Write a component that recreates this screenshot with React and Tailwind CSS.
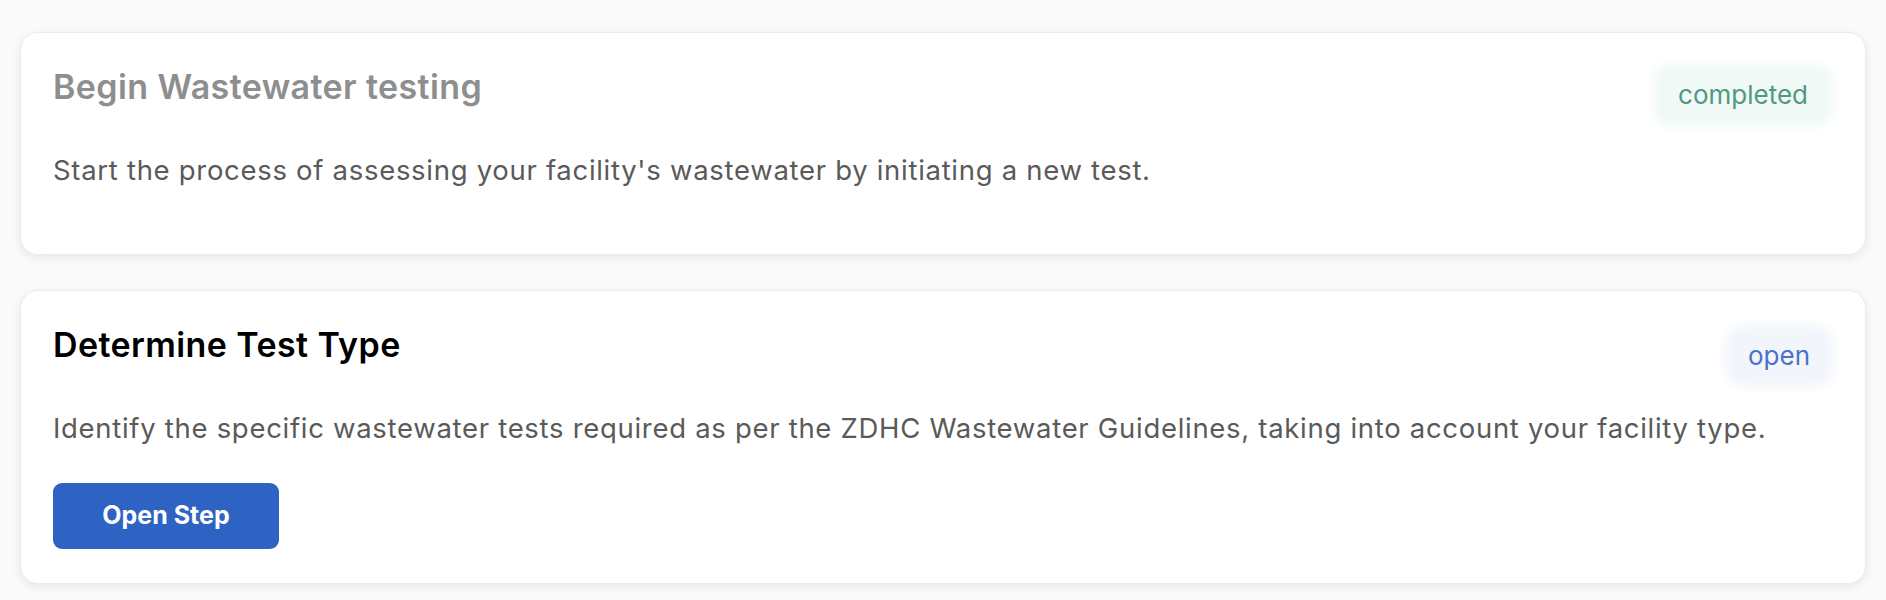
import React from "react";

const steps = [
  {
    title: "Begin Wastewater testing",
    description:
      "Start the process of assessing your facility's wastewater by initiating a new test.",
    status: "completed",
  },
  {
    title: "Determine Test Type",
    description:
      "Identify the specific wastewater tests required as per the ZDHC Wastewater Guidelines, taking into account your facility type.",
    status: "open",
  },
];

const StatusBadge = ({ status }) => {
  if (status === "completed") {
    return (
      <div className="mt-[5px] bg-[#f0f9f5] text-[#4f9a7c] text-[26px] leading-none rounded-xl px-[19px] py-[12px] shadow-[0_0_12px_6px_#f0f9f5]">
        completed
      </div>
    );
  }
  return (
    <div className="mt-[8px] bg-[#f2f5fc] text-[#4a72c8] text-[26px] leading-none rounded-xl px-[17px] py-[12px] shadow-[0_0_12px_6px_#f2f5fc]">
      open
    </div>
  );
};

const StepCard = ({ step }) => {
  const done = step.status === "completed";
  return (
    <div
      className={`bg-white rounded-[18px] border border-[#ececec] shadow-[0_3px_10px_rgba(0,0,0,0.08)] pl-[32px] pr-[38px] pt-[32px] ${
        done ? "pb-[66px]" : "pb-[34px]"
      }`}
    >
      <div className="flex justify-between items-start h-[44px]">
        <div
          className={`text-[34px] font-semibold tracking-[0.4px] leading-[44px] ${
            done ? "text-[#8e8e8e]" : "text-black"
          }`}
        >
          {step.title}
        </div>
        <StatusBadge status={step.status} />
      </div>
      <div className="mt-[43px] text-[27.5px] tracking-[0.7px] text-[#5a5a5a] leading-[36px]">
        {step.description}
      </div>
      {!done && (
        <button className="mt-[37px] w-[226px] h-[66px] rounded-[9px] bg-[#2f63c3] text-white text-[25px] font-bold">
          Open Step
        </button>
      )}
    </div>
  );
};

export default function App() {
  return (
    <div
      className="min-h-[600px] bg-[#fafafa] px-[20px] pt-[32px] flex flex-col gap-[35px]"
      style={{ fontFamily: "Inter, 'Noto Sans', sans-serif" }}
    >
      {steps.map((step) => (
        <StepCard key={step.title} step={step} />
      ))}
    </div>
  );
}
